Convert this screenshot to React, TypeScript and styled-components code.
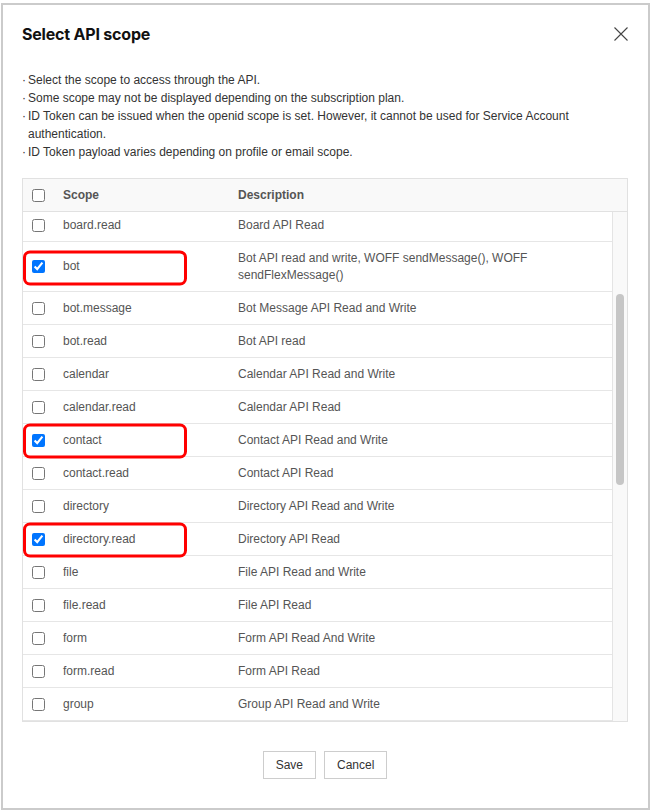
import React, { useLayoutEffect, useRef, useState } from 'react';
import styled, { createGlobalStyle } from 'styled-components';

const GlobalStyle = createGlobalStyle`
  html, body {
    margin: 0;
    padding: 0;
    background: #fff;
  }
  body {
    font-family: "Liberation Sans", Arial, sans-serif;
  }
`;

const Dialog = styled.div`
  box-sizing: border-box;
  width: 649px;
  height: 807px;
  margin: 3px 0 0 1px;
  border: 2px solid #cbcbcb;
  background: #fff;
  padding: 18px 20px 0 19px;
  display: flex;
  flex-direction: column;
`;

const Header = styled.div`
  display: flex;
  align-items: center;
  justify-content: space-between;
  height: 22px;
`;

const Title = styled.h1`
  margin: 0;
  font-family: Inter, "Liberation Sans", sans-serif;
  font-size: 16px;
  font-weight: 700;
  line-height: 22px;
  color: #111;
  letter-spacing: -0.2px;
`;

const CloseButton = styled.button`
  border: 0;
  background: none;
  padding: 0;
  width: 14px;
  height: 14px;
  display: flex;
  cursor: pointer;
`;

const Notes = styled.ul`
  list-style: none;
  margin: 26px 0 0;
  padding: 0;
  font-size: 12px;
  line-height: 18px;
  color: #333;
`;

const Note = styled.li`
  display: flex;
`;

const Dot = styled.span`
  flex: 0 0 6px;
`;

const Table = styled.div`
  margin-top: 17px;
  border: 1px solid #e1e1e1;
  font-size: 12px;
  color: #555;
`;

const HeadRow = styled.div`
  display: grid;
  grid-template-columns: 40px 175px 1fr;
  align-items: center;
  height: 32px;
  background: #f9f9f9;
  border-bottom: 1px solid #e1e1e1;
  font-weight: 700;
`;

const Body = styled.div`
  display: flex;
  height: 509px;
`;

const List = styled.div`
  flex: 1;
  min-width: 0;
  overflow: hidden;
`;

const Track = styled.div`
  position: relative;
  flex: 0 0 14px;
  background: #f9f9f9;
  border-left: 1px solid #e4e4e4;
`;

const Thumb = styled.div`
  position: absolute;
  left: 3px;
  width: 8px;
  border-radius: 4px;
  background: #c6c6c6;
`;

const Row = styled.div`
  position: relative;
  display: grid;
  grid-template-columns: 40px 175px 1fr;
  align-items: center;
  border-bottom: 1px solid #e6e6e6;
`;

const Cell = styled.div`
  padding: 7.5px 10px 7.5px 0;
  line-height: 17px;
`;

const CheckCell = styled.div`
  display: flex;
  align-items: center;
  padding-left: 9px;
`;

const Check = styled.input`
  width: 13px;
  height: 13px;
  margin: 0;
`;

const Highlight = styled.div`
  position: absolute;
  left: 0;
  top: 50%;
  width: 164px;
  height: 35px;
  margin-top: 1px;
  transform: translateY(-50%);
  box-sizing: border-box;
  border: 3px solid #f00;
  border-radius: 7px;
  pointer-events: none;
`;

const Footer = styled.div`
  display: flex;
  justify-content: center;
  gap: 8px;
  margin-top: 29px;
`;

const Button = styled.button`
  height: 28px;
  padding: 0 12px;
  border: 1px solid #cdcdcd;
  background: #fff;
  font-family: "Liberation Sans", Arial, sans-serif;
  font-size: 12px;
  color: #333;
  cursor: pointer;
`;

type Scope = { name: string; desc: string; checked?: boolean };

const scopes: Scope[] = [
  { name: 'admin', desc: 'Admin API Read and Write, Admin Settings API Read and Write, Admin Audit API Read and Write' },
  { name: 'admin.read', desc: 'Admin API Read' },
  { name: 'approval', desc: 'Approval API Read and Write' },
  { name: 'approval.read', desc: 'Approval API Read' },
  { name: 'audit.read', desc: 'Audit API Read' },
  { name: 'board', desc: 'Board API Read and Write' },
  { name: 'board.read', desc: 'Board API Read' },
  { name: 'bot', desc: 'Bot API read and write, WOFF sendMessage(), WOFF sendFlexMessage()', checked: true },
  { name: 'bot.message', desc: 'Bot Message API Read and Write' },
  { name: 'bot.read', desc: 'Bot API read' },
  { name: 'calendar', desc: 'Calendar API Read and Write' },
  { name: 'calendar.read', desc: 'Calendar API Read' },
  { name: 'contact', desc: 'Contact API Read and Write', checked: true },
  { name: 'contact.read', desc: 'Contact API Read' },
  { name: 'directory', desc: 'Directory API Read and Write' },
  { name: 'directory.read', desc: 'Directory API Read', checked: true },
  { name: 'file', desc: 'File API Read and Write' },
  { name: 'file.read', desc: 'File API Read' },
  { name: 'form', desc: 'Form API Read And Write' },
  { name: 'form.read', desc: 'Form API Read' },
  { name: 'group', desc: 'Group API Read and Write' },
  { name: 'group.folder', desc: 'Group Folder API Read and Write' },
  { name: 'group.note', desc: 'Group Note API Read and Write' },
  { name: 'group.read', desc: 'Group API Read' },
  { name: 'mail', desc: 'Mail API Read and Write' },
  { name: 'mail.read', desc: 'Mail API Read' },
  { name: 'orgunit', desc: 'Organization API Read and Write' },
  { name: 'orgunit.read', desc: 'Organization API Read' },
  { name: 'partner', desc: 'Partner API Read and Write' },
  { name: 'partner.read', desc: 'Partner API Read' },
  { name: 'security.external.browser', desc: 'External Browser API Read and Write' },
  { name: 'task', desc: 'Task API Read and Write' },
  { name: 'task.read', desc: 'Task API Read' },
  { name: 'user', desc: 'User API Read and Write' },
  { name: 'user.read', desc: 'User API Read' },
  { name: 'user.email.read', desc: 'User Email Read' },
  { name: 'user.profile.read', desc: 'User Profile Read' },
  { name: 'openid', desc: 'ID Token issue' },
  { name: 'profile', desc: 'ID Token profile information' },
  { name: 'email', desc: 'ID Token email information' },
];

const notes = [
  'Select the scope to access through the API.',
  'Some scope may not be displayed depending on the subscription plan.',
  'ID Token can be issued when the openid scope is set. However, it cannot be used for Service Account authentication.',
  'ID Token payload varies depending on profile or email scope.',
];

const CloseIcon = () => (
  <svg width="14" height="14" viewBox="0 0 14 14">
    <path d="M0.5 0.5 L13.5 13.5 M13.5 0.5 L0.5 13.5" stroke="#444" strokeWidth="1.1" fill="none" />
  </svg>
);

const App = () => {
  const listRef = useRef<HTMLDivElement>(null);
  const [thumb, setThumb] = useState({ top: 0, height: 0 });

  useLayoutEffect(() => {
    const el = listRef.current;
    if (!el) return;
    el.scrollTop = 218;
    const view = el.clientHeight;
    const total = el.scrollHeight;
    const height = (view * view) / total;
    const top = (el.scrollTop / (total - view)) * (view - height);
    setThumb({ top, height });
  }, []);

  return (
    <>
      <GlobalStyle />
      <Dialog>
        <Header>
          <Title>Select API scope</Title>
          <CloseButton aria-label="Close">
            <CloseIcon />
          </CloseButton>
        </Header>
        <Notes>
          {notes.map(n => (
            <Note key={n}>
              <Dot>·</Dot>
              <span>{n}</span>
            </Note>
          ))}
        </Notes>
        <Table>
          <HeadRow>
            <CheckCell>
              <Check type="checkbox" readOnly />
            </CheckCell>
            <Cell>Scope</Cell>
            <Cell>Description</Cell>
          </HeadRow>
          <Body>
            <List ref={listRef}>
              {scopes.map(s => (
                <Row key={s.name}>
                  <CheckCell>
                    <Check type="checkbox" checked={!!s.checked} readOnly />
                  </CheckCell>
                  <Cell>{s.name}</Cell>
                  <Cell>{s.desc}</Cell>
                  {s.checked ? <Highlight /> : null}
                </Row>
              ))}
            </List>
            <Track>
              <Thumb style={{ top: thumb.top, height: thumb.height }} />
            </Track>
          </Body>
        </Table>
        <Footer>
          <Button>Save</Button>
          <Button>Cancel</Button>
        </Footer>
      </Dialog>
    </>
  );
};

export default App;
